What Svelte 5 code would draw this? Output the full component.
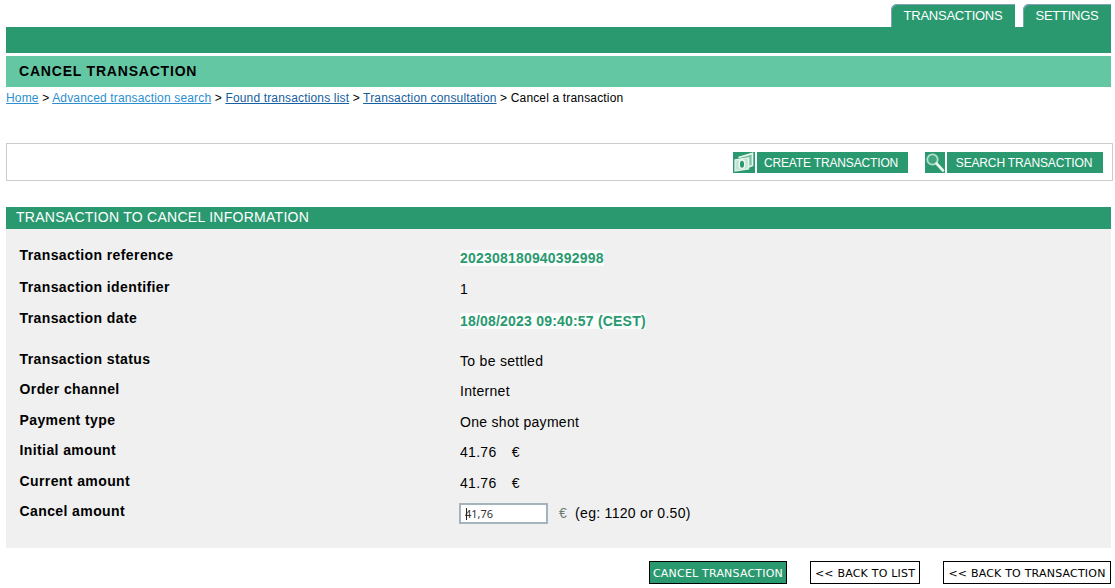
<script>
  const crumbs = [
    { label: 'Home', cls: 'light' },
    { label: 'Advanced transaction search', cls: 'light' },
    { label: 'Found transactions list', cls: 'dark' },
    { label: 'Transaction consultation', cls: 'dark' }
  ];
  const rows = [
    { label: 'Transaction reference', value: '202308180940392998', hl: true, mid: true },
    { label: 'Transaction identifier', value: '1', mid: true },
    { label: 'Transaction date', value: '18/08/2023 09:40:57 (CEST)', hl: true, tall: true },
    { label: 'Transaction status', value: 'To be settled' },
    { label: 'Order channel', value: 'Internet' },
    { label: 'Payment type', value: 'One shot payment' },
    { label: 'Initial amount', value: '41.76', euro: true },
    { label: 'Current amount', value: '41.76', euro: true }
  ];
</script>

<div class="page">
  <nav class="tabs">
    <div class="tab t1">TRANSACTIONS</div>
    <div class="tab t2">SETTINGS</div>
  </nav>
  <div class="bar"></div>
  <h1 class="title">CANCEL TRANSACTION</h1>
  <div class="crumbs">
    {#each crumbs as c}
      <a href="#top" class={c.cls}>{c.label}</a>{' > '}
    {/each}<span>Cancel a transaction</span>
  </div>

  <div class="toolbar">
    <div class="icon ic1">
      <svg width="22" height="21" viewBox="0 0 22 21" fill="none">
        <path d="M2 8 L15.5 5.5 L15.5 17 L2 19 Z" fill="#c2e3d4" stroke="#dff1e8" stroke-width="1.3"/>
        <path d="M5.5 5.5 L19.5 1.5 L19.5 13.5 L15.5 15 L15.5 5.5" fill="#7dc2a6" stroke="#e6f4ee" stroke-width="1.7"/>
        <ellipse cx="9" cy="12.2" rx="2.8" ry="4.2" fill="#2a9970" stroke="#f2faf6" stroke-width="1.4"/>
      </svg>
    </div>
    <div class="tbtn b1">CREATE TRANSACTION</div>
    <div class="icon ic2">
      <svg width="20" height="21" viewBox="0 0 20 21" fill="none">
        <circle cx="7.5" cy="7.5" r="5.2" fill="#3fa580" stroke="#b4dfcd" stroke-width="1.8"/>
        <path d="M11.5 11.5 L18 18.5" stroke="#e8f5ef" stroke-width="2.6" stroke-linecap="round"/>
      </svg>
    </div>
    <div class="tbtn b2">SEARCH TRANSACTION</div>
  </div>

  <h2 class="sec">TRANSACTION TO CANCEL INFORMATION</h2>
  <div class="panel">
    {#each rows as r}
      <div class="row" class:tall={r.tall} class:mid={r.mid} class:hlrow={r.hl}>
        <div class="lab">{r.label}</div>
        <div class="val">
          {#if r.hl}<span class="hl">{r.value}</span>{:else}{r.value}{/if}
          {#if r.euro}<span class="eu">€</span>{/if}
        </div>
      </div>
    {/each}
    <div class="row">
      <div class="lab">Cancel amount</div>
      <div class="val inputrow">
        <span class="field">
          <input class="amt" value="41,76" />
          <span class="caret"></span>
        </span>
        <span class="eu2">€</span>
        <span>(eg: 1120 or 0.50)</span>
      </div>
    </div>
  </div>

  <div class="actions">
    <button class="act primary">CANCEL TRANSACTION</button>
    <button class="act a2">&lt;&lt; BACK TO LIST</button>
    <button class="act a3">&lt;&lt; BACK TO TRANSACTION</button>
  </div>
</div>

<style>
  :global(body) { margin: 0; background: #fff; }
  .page {
    width: 1105px;
    margin-left: 6px;
    font-family: "Liberation Sans", Arial, sans-serif;
    font-size: 12px;
    color: #000;
  }
  .tabs { display: flex; justify-content: flex-end; gap: 8px; padding-top: 4px; height: 23px; }
  .tab {
    background: #2a9970;
    color: #fff;
    font-size: 13px;
    letter-spacing: -0.25px;
    line-height: 23px;
    text-align: center;
    border-top-left-radius: 6px;
    box-shadow: inset 1px 1px 0 #7fa3b5;
  }
  .t1 { width: 124px; }
  .t2 { width: 88px; }
  .bar { height: 26px; background: #2a9970; }
  .title {
    margin: 3px 0 0;
    height: 31px;
    background: #64c7a4;
    font-size: 14px;
    line-height: 30px;
    font-weight: bold;
    padding-left: 13px;
    letter-spacing: 0.8px;
  }
  .crumbs { height: 56px; line-height: 22px; box-sizing: border-box; letter-spacing: 0.16px; }
  .crumbs a { text-decoration: underline; }
  .light { color: #2b8fcf; }
  .dark { color: #15609f; }
  .toolbar {
    height: 36px;
    width: 1096px;
    border: 1px solid #cccccc;
    display: flex;
    align-items: center;
    justify-content: flex-end;
    padding-right: 9px;
    margin-right: -2px;
  }
  .icon {
    height: 21px;
    background: #2a9970;
    display: flex;
    align-items: center;
    justify-content: center;
    margin-right: 2px;
  }
  .ic1 { width: 22px; }
  .ic2 { width: 20px; }
  .tbtn {
    background: #2a9970;
    color: #fff;
    height: 21px;
    line-height: 23px;
    font-size: 12px;
    letter-spacing: -0.15px;
    text-align: center;
    box-sizing: border-box;
  }
  .b1 { width: 151px; margin-right: 17px; padding-right: 3px; }
  .b2 { width: 156px; padding-right: 2px; }
  .sec {
    margin: 26px 0 0;
    height: 22px;
    background: #2a9970;
    color: #fff;
    font-size: 14px;
    font-weight: normal;
    line-height: 21px;
    letter-spacing: 0.27px;
    padding-left: 10px;
  }
  .panel {
    height: 319px;
    box-sizing: border-box;
    background: #f0f0f0;
    padding-top: 12px;
    font-size: 14px;
  }
  .row { display: flex; height: 30.4px; }
  .row.mid { height: 31.5px; }
  .row.tall { height: 41px; }
  .lab { width: 454px; padding-left: 13.5px; box-sizing: border-box; font-weight: bold; line-height: 30px; height: 30px; margin-top: -1px; letter-spacing: 0.4px; }
  .val { line-height: 30px; margin-top: 1px; white-space: pre; letter-spacing: 0.3px; }
  .hlrow .val { margin-top: 2px; }
  .hl { color: #2a9970; font-weight: bold; background: #f9fcfa; letter-spacing: 0.2px; }
  .eu { margin-left: 11px; }
  .inputrow { display: flex; align-items: center; height: 21px; line-height: 21px; margin-top: 6px; margin-left: -1px; }
  .field { position: relative; display: block; height: 21px; }
  .amt {
    display: block;
    width: 89px;
    height: 21px;
    box-sizing: border-box;
    border: 2px solid #a3b4bd;
    background: #fff;
    padding: 0 4px;
    margin: 0;
    font-family: "Noto Sans", Tahoma, sans-serif;
    font-size: 11px;
    color: #333;
    outline: none;
  }
  .caret { position: absolute; left: 7px; top: 5px; width: 1px; height: 12px; background: #222; }
  .eu2 { color: #6b7a74; margin-left: 11px; margin-right: 8px; }
  .actions { display: flex; justify-content: flex-end; margin-top: 13px; }
  .act {
    height: 23px;
    box-sizing: border-box;
    border: 1px solid #000;
    background: #fff;
    color: #000;
    padding: 2px 0 0;
    font-family: "DejaVu Sans", Tahoma, sans-serif;
    font-size: 11px;
    letter-spacing: 0.2px;
    line-height: 19px;
    margin: 0;
  }
  .primary { background: #2a9970; color: #fff; width: 138px; }
  .a2 { width: 110px; margin-left: 23px; }
  .a3 { width: 168px; margin-left: 23px; }
</style>
